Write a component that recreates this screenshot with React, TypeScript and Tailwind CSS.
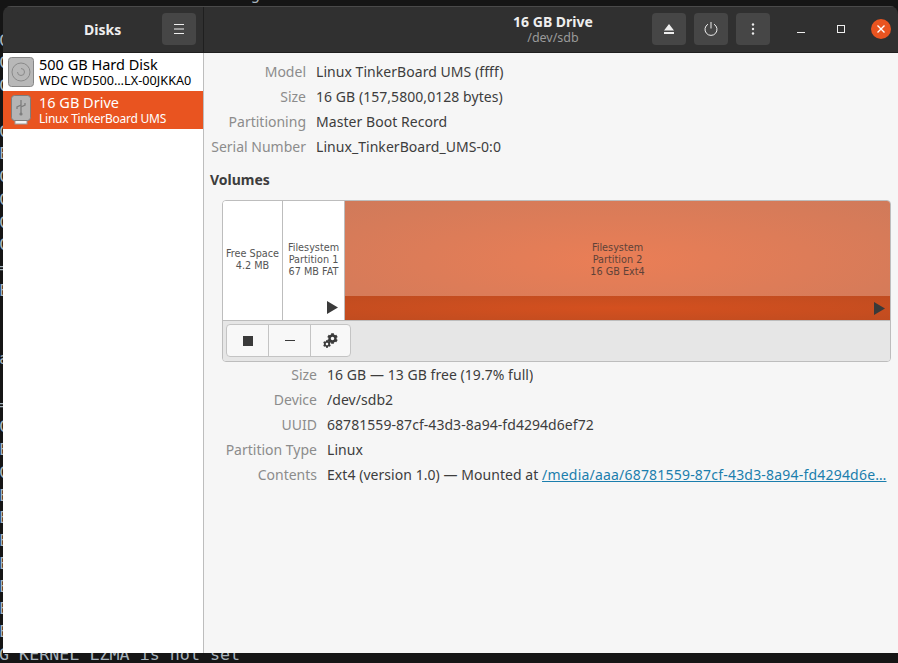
import { FaCog } from "react-icons/fa"

const ui = "font-['Noto_Sans','Open_Sans',sans-serif]"

const driveRows = [
  { label: "Model", value: "Linux TinkerBoard UMS (ffff)" },
  { label: "Size", value: "16 GB (157,5800,0128 bytes)" },
  { label: "Partitioning", value: "Master Boot Record" },
  { label: "Serial Number", value: "Linux_TinkerBoard_UMS-0:0" },
]

const volumeRows = [
  { label: "Size", value: "16 GB — 13 GB free (19.7% full)" },
  { label: "Device", value: "/dev/sdb2" },
  { label: "UUID", value: "68781559-87cf-43d3-8a94-fd4294d6ef72" },
  { label: "Partition Type", value: "Linux" },
]

// first letters of the terminal output that show beside the window
const terminalLines = [
  "C                        g",
  "",
  "C", "C", "C", "", "C", "E", "C", "C", "C", "C", "=", "E", "", "", "a", "", "=", "C", "E", "C",
  "E", "E", "E", "E", "E", "E", "E",
  "G KERNEL LZMA is not set",
]

function HeaderButton({ children }: { children: React.ReactNode }) {
  return (
    <div className="flex h-8 w-[34px] items-center justify-center rounded-[4px] bg-[#464646]">
      {children}
    </div>
  )
}

function InfoRow({ label, value, labelWidth }: { label: string; value: React.ReactNode; labelWidth: string }) {
  return (
    <div className="flex h-[25px] items-center gap-[10px] text-[14px]">
      <span className={`${labelWidth} shrink-0 text-right text-[#8c8c8c]`}>{label}</span>
      <span className="min-w-0 truncate tracking-[0.05px] text-[#3d3d3d]">{value}</span>
    </div>
  )
}

function Triangle() {
  return (
    <svg width="11" height="13" viewBox="0 0 11 13">
      <path d="M0 0 L11 6.5 L0 13 Z" fill="#3a3a3a" />
    </svg>
  )
}

export default function App() {
  return (
    <div className={`relative h-[663px] w-[898px] overflow-hidden bg-[#151515] ${ui}`}>
      {/* terminal behind the window */}
      <div className="-mt-[17px] -ml-px whitespace-pre font-['DejaVu_Sans_Mono',monospace] text-[16.7px] leading-[22.75px] text-[#a9b4bd]">
        {terminalLines.map((line, i) => (
          <div key={i} className="h-[22.75px]">{line}</div>
        ))}
      </div>

      {/* window */}
      <div className="absolute left-[3px] top-[6px] flex h-[647px] w-[895px] flex-col overflow-hidden rounded-t-[8px]">
        <header className="flex h-[47px] shrink-0 border-t border-b border-t-[#4a4a4a] border-b-[#1f1f1f] bg-[#303030] pb-px text-white">
          <div className="flex w-[200px] shrink-0 items-center pr-[7px]">
            <span className="ml-[81px] text-[14px] font-bold text-[#eeeeee]">Disks</span>
            <div className="ml-auto">
              <HeaderButton>
                <svg width="12" height="12" viewBox="0 0 12 12" stroke="#eeeeee" strokeWidth="1">
                  <path d="M1 1.5H11M1 6H11M1 10.5H11" />
                </svg>
              </HeaderButton>
            </div>
          </div>
          <div className="-mb-px w-px shrink-0 bg-[#1f1f1f]" />
          <div className="flex flex-1 items-center">
            <div className="ml-[249px] flex w-[200px] flex-col items-center leading-none">
              <span className="text-[14px] font-bold leading-[16px] text-[#eeeeee]">16 GB Drive</span>
              <span className="text-[12.5px] leading-[15px] text-[#9a9a9a]">/dev/sdb</span>
            </div>
            <div className="-ml-[1px] flex gap-2">
              <HeaderButton>
                <svg width="10" height="10" viewBox="0 0 10 10" fill="#eeeeee">
                  <path d="M5 0 L10 6.5 H0 Z M0 8 H10 V10 H0 Z" />
                </svg>
              </HeaderButton>
              <HeaderButton>
                <svg width="14" height="14" viewBox="0 0 14 14" fill="none" stroke="#eeeeee" strokeWidth="1">
                  <path d="M4 2.2 A6 6 0 1 0 10 2.2 M7 0 V6.5" />
                </svg>
              </HeaderButton>
              <HeaderButton>
                <svg width="4" height="12" viewBox="0 0 4 12" fill="#eeeeee">
                  <circle cx="2" cy="1.5" r="1.2" />
                  <circle cx="2" cy="6" r="1.2" />
                  <circle cx="2" cy="10.5" r="1.2" />
                </svg>
              </HeaderButton>
            </div>
            <div className="ml-[27px] flex items-center">
              <div className="mt-[7px] h-px w-2 bg-[#eeeeee]" />
              <div className="ml-8 h-[8px] w-[8px] border border-[#eeeeee]" />
              <div className="ml-[26px] flex h-5 w-5 items-center justify-center rounded-full bg-[#e95420]">
                <svg width="10" height="10" viewBox="0 0 10 10" stroke="#ffffff" strokeWidth="1.4">
                  <path d="M1.5 1.5 L8.5 8.5 M8.5 1.5 L1.5 8.5" />
                </svg>
              </div>
            </div>
          </div>
        </header>

        <div className="flex min-h-0 flex-1">
          {/* drive list */}
          <aside className="w-[201px] shrink-0 border-r border-[#bdbdbd] bg-white">
            <div className="flex h-[38px] items-center gap-[4px] pl-[5px]">
              <svg width="26" height="30" viewBox="0 0 26 30">
                <rect x="0.5" y="0.5" width="25" height="29" rx="3" fill="#b8b8b8" stroke="#868686" />
                <circle cx="13" cy="15" r="9" fill="none" stroke="#8a8a8a" />
                <path d="M9.5 15 A3.5 3.5 0 1 0 13 11.5" fill="none" stroke="#8a8a8a" />
              </svg>
              <div className="ml-[1px] -mt-[2px] min-w-0 text-black">
                <div className="text-[14.5px] leading-[18px]">500 GB Hard Disk</div>
                <div className="text-[12.6px] tracking-[0.05px] leading-[15px]">WDC WD500…LX-00JKKA0</div>
              </div>
            </div>
            <div className="flex h-[38px] items-center gap-[4px] bg-[#e95420] pl-[5px] text-white">
              <svg width="26" height="30" viewBox="0 0 26 30">
                <rect x="7" y="24" width="12" height="5" fill="#f2f2f2" stroke="#9a9a9a" />
                <rect x="3.5" y="0.5" width="19" height="25" rx="3" fill="#b4b4b4" stroke="#7d7d7d" />
                <path d="M13 5 V19 M13 10 L9 12 V14 M13 12 L17 10 V8" fill="none" stroke="#7d7d7d" strokeWidth="1.3" />
                <circle cx="13" cy="19" r="1.6" fill="#7d7d7d" />
              </svg>
              <div className="ml-[1px] -mt-[2px] min-w-0">
                <div className="text-[14.5px] leading-[18px]">16 GB Drive</div>
                <div className="text-[12px] tracking-[-0.25px] leading-[15px]">Linux TinkerBoard UMS</div>
              </div>
            </div>
          </aside>

          {/* details */}
          <main className="min-w-0 flex-1 bg-[#f6f6f6] px-[7px]">
            <div className="pt-[6px]">
              {driveRows.map((row) => (
                <InfoRow key={row.label} label={row.label} value={row.value} labelWidth="w-[95px]" />
              ))}
            </div>
            <h2 className="mt-[8px] h-[25px] -ml-px text-[14px] leading-[25px] font-bold text-[#3d3d3d]">Volumes</h2>
            <section className="mt-[8px] ml-[11px] w-[669px] overflow-hidden rounded-[4px] border border-[#bdbdbd]">
              <div className="flex h-[120px] border-b border-[#bdbdbd] font-['DejaVu_Sans',sans-serif] text-[9.7px] leading-[12px] text-[#555555]">
                <div className="flex w-[60px] shrink-0 flex-col items-center justify-center border-r border-[#bdbdbd] bg-white pb-[2px] text-center">
                  <span>Free Space</span>
                  <span>4.2 MB</span>
                </div>
                <div className="relative flex w-[62px] shrink-0 flex-col items-center justify-center border-r border-[#bdbdbd] bg-white pb-[2px] text-center">
                  <span>Filesystem</span>
                  <span>Partition 1</span>
                  <span>67 MB FAT</span>
                  <div className="absolute right-[6px] bottom-[6px] leading-none"><Triangle /></div>
                </div>
                <div className="relative flex min-w-0 flex-1 flex-col items-center justify-center bg-[radial-gradient(ellipse_at_center,#ea7e56_0%,#d07a5a_100%)] pb-[2px] text-center text-[#5e4238]">
                  <span>Filesystem</span>
                  <span>Partition 2</span>
                  <span>16 GB Ext4</span>
                  <div className="absolute inset-x-0 bottom-0 flex h-6 items-center justify-end bg-[radial-gradient(ellipse_at_center,#d4501f_0%,#c04c20_100%)] pr-[5px]">
                    <Triangle />
                  </div>
                </div>
              </div>
              <div className="h-[40px] bg-[#e6e6e6] pt-[3px] pl-[3px]">
                <div className="flex h-[33px] w-[125px] rounded-[4px] border border-[#c4c4c4] bg-[#f8f8f8] text-[#3a3a3a]">
                  <div className="flex w-[42px] items-center justify-center border-r border-[#c4c4c4]">
                    <div className="h-[10px] w-[10px] bg-[#3a3a3a]" />
                  </div>
                  <div className="flex w-[42px] items-center justify-center border-r border-[#c4c4c4]">
                    <div className="h-px w-[10px] bg-[#3a3a3a]" />
                  </div>
                  <div className="relative flex-1">
                    <FaCog className="absolute top-[8px] left-[16px] h-[11px] w-[11px]" />
                    <FaCog className="absolute top-[15px] left-[12px] h-[8px] w-[8px]" />
                  </div>
                </div>
              </div>
            </section>
            <div>
              {volumeRows.map((row) => (
                <InfoRow key={row.label} label={row.label} value={row.value} labelWidth="w-[106px]" />
              ))}
              <InfoRow
                label="Contents"
                labelWidth="w-[106px]"
                value={
                  <>
                    Ext4 (version 1.0) — Mounted at{" "}
                    <span className="tracking-[0.2px] text-[#1b7ead] underline">/media/aaa/68781559-87cf-43d3-8a94-fd4294d6e…</span>
                  </>
                }
              />
            </div>
          </main>
        </div>
      </div>
    </div>
  )
}
